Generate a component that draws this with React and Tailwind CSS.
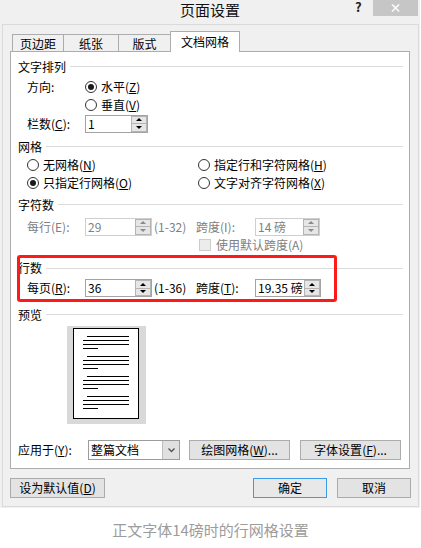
import React from "react";

const Key = ({ k }) => (
  <>
    (<span className="underline">{k}</span>)
  </>
);

const Radio = ({ on, children }) => (
  <div className="flex items-center">
    <span className="w-[12px] h-[12px] rounded-full border border-[#333] bg-white flex items-center justify-center">
      {on && <span className="w-[6px] h-[6px] rounded-full bg-[#1a1a1a]" />}
    </span>
    <span className="ml-[4px]">{children}</span>
  </div>
);

const GroupTitle = ({ children, h }) => (
  <div className={"flex items-center " + h}>
    <span>{children}</span>
    <span className="ml-[4px] flex-1 h-px bg-[#dcdcdc]" />
  </div>
);

const Spin = ({ off }) => (
  <div className="w-[16px] flex flex-col">
    <div className="flex-1 flex items-center justify-center border border-[#b4b4b4] bg-[#e6e6e6]">
      <span
        className={
          "w-0 h-0 border-x-[3px] border-x-transparent border-b-[3px] " +
          (off ? "border-b-[#8a8a8a]" : "border-b-black")
        }
      />
    </div>
    <div className="flex-1 flex items-center justify-center border border-t-0 border-[#b4b4b4] bg-[#e6e6e6]">
      <span
        className={
          "w-0 h-0 border-x-[3px] border-x-transparent border-t-[3px] " +
          (off ? "border-t-[#8a8a8a]" : "border-t-black")
        }
      />
    </div>
  </div>
);

const Field = ({ w, value, off }) => (
  <div
    className={
      w +
      " h-[18px] flex bg-white border " +
      (off ? "border-[#cfcfcf] text-[#808080]" : "border-[#a3a3a3] text-black")
    }
  >
    <span className="flex-1 pl-[2px] leading-[16px] overflow-hidden whitespace-nowrap">
      {value}
    </span>
    <Spin off={off} />
  </div>
);

const Btn = ({ w, children, primary }) => (
  <div
    className={
      w +
      " h-[20px] flex items-center justify-center border " +
      (primary ? "border-[#3c9be8] bg-[#e8e8e8]" : "border-[#acacac] bg-[#e3e3e3]")
    }
  >
    {children}
  </div>
);

const Preview = () => {
  const groups = [0, 20, 40, 60];
  return (
    <div className="ml-[49px] w-[79px] h-[98px] bg-[#d9d9d9] pt-[2px] pl-[6px]">
      <div className="w-[66px] h-[91px] bg-white border border-black">
        <svg width="64" height="89" viewBox="0 0 64 89">
          {groups.map((g) => (
            <g key={g} stroke="#000" strokeWidth="1">
              <line x1="13" x2="55" y1={7.5 + g} y2={7.5 + g} />
              <line x1="9" x2="55" y1={11.5 + g} y2={11.5 + g} />
              <line x1="9" x2="55" y1={15.5 + g} y2={15.5 + g} />
              <line x1="9" x2="24" y1={19.5 + g} y2={19.5 + g} />
            </g>
          ))}
        </svg>
      </div>
    </div>
  );
};

export default function App() {
  return (
    <div className="w-[421px] h-[548px] bg-white text-[12px] leading-[14px] text-black font-['Noto_Sans_CJK_SC','Liberation_Sans',sans-serif]">
      <div className="w-[420px] h-[508px] bg-[#f0f0f0]">
        {/* title bar */}
        <div className="relative h-[24px]">
          <div className="text-center text-[15px] leading-[20px] text-[#111]">页面设置</div>
          <span className="absolute left-[355px] top-0 text-[13px] font-bold leading-[14px] text-[#222]">
            ?
          </span>
          <div className="absolute left-[373px] top-0 w-[45px] h-[16px] bg-[#c6c6c6] flex items-center justify-center text-white text-[12px] font-bold leading-[12px]">
            ×
          </div>
        </div>

        {/* frame */}
        <div className="ml-[2px] w-[417px] h-[483px] border border-[#dadada] pt-[6px] px-[7px]">
          {/* tabs */}
          <div className="flex items-end h-[20px] pl-[2px]">
            <div className="w-[52px] h-[17px] border border-b-0 border-[#acacac] flex items-center justify-center pt-[1px]">
              页边距
            </div>
            <div className="-ml-px w-[56px] h-[17px] border border-b-0 border-[#acacac] flex items-center justify-center pt-[1px]">
              纸张
            </div>
            <div className="-ml-px w-[53px] h-[17px] border border-b-0 border-[#acacac] flex items-center justify-center pt-[1px]">
              版式
            </div>
            <div className="-ml-px relative z-10 -mb-px w-[70px] h-[21px] bg-white border border-b-0 border-[#acacac] flex items-center justify-center pb-[1px]">
              文档网格
            </div>
          </div>

          {/* panel */}
          <div className="relative w-[400px] h-[418px] bg-white border border-[#acacac] pl-[7px] pr-[6px] pt-[4px] flex flex-col">
            <GroupTitle h="h-[21px]">文字排列</GroupTitle>
            <div className="h-[19px] flex items-center pl-[9px]">
              <span className="w-[58px]">方向:</span>
              <Radio on>
                水平<Key k="Z" />
              </Radio>
            </div>
            <div className="h-[17px] flex items-center pl-[67px]">
              <Radio>
                垂直<Key k="V" />
              </Radio>
            </div>
            <div className="h-[21px] flex items-center pl-[9px]">
              <span className="w-[58px]">
                栏数<Key k="C" />:
              </span>
              <Field w="w-[63px]" value="1" />
            </div>

            <div className="mt-[2px]">
              <GroupTitle h="h-[21px]">网格</GroupTitle>
            </div>
            <div className="h-[16px] flex items-center pl-[9px]">
              <div className="w-[171px]">
                <Radio>
                  无网格<Key k="N" />
                </Radio>
              </div>
              <Radio>
                指定行和字符网格<Key k="H" />
              </Radio>
            </div>
            <div className="h-[19px] flex items-center pl-[9px]">
              <div className="w-[171px]">
                <Radio on>
                  只指定行网格<Key k="O" />
                </Radio>
              </div>
              <Radio>
                文字对齐字符网格<Key k="X" />
              </Radio>
            </div>

            <GroupTitle h="h-[25px]">字符数</GroupTitle>
            <div className="h-[19px] flex items-center pl-[9px] text-[#808080]">
              <span className="w-[58px]">每行(E):</span>
              <Field w="w-[67px]" value="29" off />
              <span className="w-[44px] pl-[2px]">(1-32)</span>
              <span className="w-[59px]">跨度(I):</span>
              <Field w="w-[65px]" value="14 磅" off />
            </div>
            <div className="h-[18px] flex items-center pl-[181px] text-[#808080]">
              <span className="w-[12px] h-[12px] border border-[#cccccc] bg-[#ececec]" />
              <span className="ml-[5px]">使用默认跨度(A)</span>
            </div>

            <div className="mt-[4px]">
              <GroupTitle h="h-[20px]">行数</GroupTitle>
            </div>
            <div className="h-[20px] flex items-center pl-[9px]">
              <span className="w-[58px]">
                每页<Key k="R" />:
              </span>
              <Field w="w-[67px]" value="36" />
              <span className="w-[44px] pl-[2px]">(1-36)</span>
              <span className="w-[59px]">
                跨度<Key k="T" />:
              </span>
              <Field w="w-[66px]" value="19.35 磅" />
            </div>

            <div className="mt-[6px]">
              <GroupTitle h="h-[21px]">预览</GroupTitle>
            </div>
            <div className="mt-[1px]">
              <Preview />
            </div>

            <div className="mt-[16px] h-[20px] flex items-center">
              <span className="w-[70px]">
                应用于<Key k="Y" />:
              </span>
              <div className="w-[92px] h-[20px] border border-[#9c9c9c] bg-white flex">
                <span className="flex-1 pl-[2px] leading-[18px]">整篇文档</span>
                <span className="w-[17px] border-l border-[#bdbdbd] bg-[#e0e0e0] flex items-center justify-center">
                  <svg width="9" height="6" viewBox="0 0 9 6">
                    <polyline points="1.5,1.5 4.5,4.5 7.5,1.5" fill="none" stroke="#555" strokeWidth="1.4" />
                  </svg>
                </span>
              </div>
              <div className="ml-[9px]">
                <Btn w="w-[101px]">
                  绘图网格<Key k="W" />...
                </Btn>
              </div>
              <div className="ml-[10px]">
                <Btn w="w-[101px]">
                  字体设置<Key k="F" />...
                </Btn>
              </div>
            </div>

            {/* annotation */}
            <div className="absolute left-[6px] top-[203px] w-[320px] h-[47px] border-[3px] border-[#ff1a1a] rounded-[3px]" />
          </div>

          {/* bottom buttons */}
          <div className="mt-[9px] flex items-center">
            <Btn w="w-[95px]">
              设为默认值<Key k="D" />
            </Btn>
            <div className="ml-auto flex gap-[10px]">
              <Btn w="w-[74px]" primary>
                确定
              </Btn>
              <Btn w="w-[74px]">取消</Btn>
            </div>
          </div>
        </div>
      </div>

      <div className="mt-[12px] text-center text-[15px] leading-[20px] text-[#9c9c9c]">
        正文字体14磅时的行网格设置
      </div>
    </div>
  );
}
